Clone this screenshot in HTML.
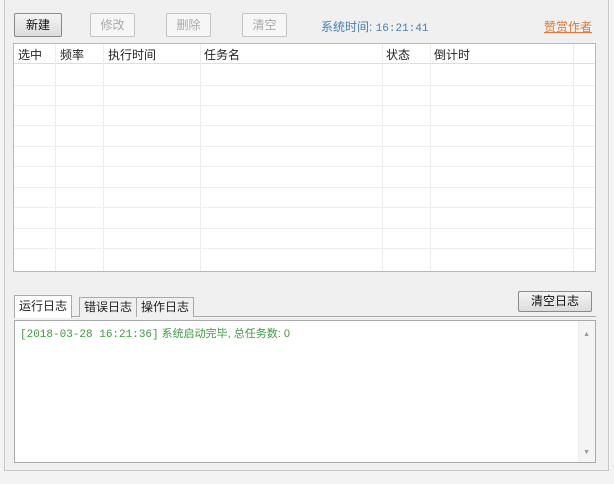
<!DOCTYPE html>
<html><head><meta charset="utf-8"><style>
*{box-sizing:border-box;margin:0;padding:0}
body{width:614px;height:484px;background:#f3f3f3;font-family:"Liberation Sans","Noto Sans CJK SC",sans-serif;font-size:12px;color:#222;position:relative;overflow:hidden}
.abs{position:absolute}
.frame{left:4px;top:0;width:605px;height:471px;border:1px solid #c8c8c8;border-top:none;background:#f0f0f0}
.btn{position:absolute;top:13px;height:24px;border:1px solid #c4c4c4;border-radius:2px;background:#f6f6f6;color:#aaa;text-align:center;line-height:22px;font-size:12px}
.btn.on{border-color:#8a8a8a;color:#111;background:linear-gradient(#f4f4f4,#dcdcdc)}
.table{left:13px;top:43px;width:583px;height:229px;border:1px solid #b8b8b8;background:#fff;overflow:hidden}
.hdr{position:absolute;top:0;left:0;right:0;height:20px;border-bottom:1px solid #dedede}
.hdr span{position:absolute;top:2px;font-size:12px}
.vl{position:absolute;top:0;bottom:0;width:1px;background:#ececec}
.hl{position:absolute;left:0;right:0;height:1px;background:#efefef}
.tab{position:absolute;height:22px;border:1px solid #aaa;border-bottom:none;background:#f0f0f0;line-height:20px;padding:0 4px;font-size:12px}
.log{left:14px;top:320px;width:582px;height:143px;border:1px solid #a9a9a9;background:#fff}
</style></head><body>
<div class="abs frame"></div>
<div class="btn on" style="left:14px;width:48px">新建</div>
<div class="btn" style="left:90px;width:45px">修改</div>
<div class="btn" style="left:166px;width:45px">删除</div>
<div class="btn" style="left:242px;width:45px">清空</div>
<div class="abs" style="left:321px;top:18px;color:#4a7fb5;font-size:12px">系统时间: <span style="font-family:'Liberation Mono',monospace;font-size:11px">16:21:41</span></div>
<div class="abs" style="left:544px;top:18px;color:#d87a3a;text-decoration:underline;font-size:12px">赞赏作者</div>
<div class="abs table">
<div class="hdr"><span style="left:4px">选中</span><span style="left:46px">频率</span><span style="left:94px">执行时间</span><span style="left:190px">任务名</span><span style="left:372px">状态</span><span style="left:420px">倒计时</span></div>
<div class="vl" style="left:41px"></div><div class="vl" style="left:89px"></div><div class="vl" style="left:186px"></div><div class="vl" style="left:368px"></div><div class="vl" style="left:416px"></div><div class="vl" style="left:559px"></div>
<div class="hl" style="top:41px"></div><div class="hl" style="top:61px"></div><div class="hl" style="top:81px"></div><div class="hl" style="top:102px"></div><div class="hl" style="top:122px"></div><div class="hl" style="top:143px"></div><div class="hl" style="top:163px"></div><div class="hl" style="top:184px"></div><div class="hl" style="top:204px"></div>
</div>
<div class="abs" style="left:14px;top:316px;width:582px;height:1px;background:#aaa"></div>
<div class="tab" style="left:14px;top:295px;background:#fff;height:23px;z-index:2">运行日志</div>
<div class="tab" style="left:79px;top:297px;height:20px;line-height:18px">错误日志</div>
<div class="tab" style="left:136px;top:297px;height:20px;line-height:18px">操作日志</div>
<div class="btn on" style="left:518px;top:291px;width:74px;height:21px;line-height:19px">清空日志</div>
<div class="abs log">
<div style="position:absolute;left:5px;top:4px;color:#3e9a3e;font-size:11px"><span style="font-family:'Liberation Mono',monospace">[2018-03-28 16:21:36]</span> 系统启动完毕, 总任务数: 0</div>
<div style="position:absolute;right:0;top:0;width:17px;height:141px;background:#f4f4f4;border-left:1px solid #eee"></div>
<div style="position:absolute;right:5px;top:10px;color:#999;font-size:7px">▲</div>
<div style="position:absolute;right:5px;bottom:6px;color:#999;font-size:7px">▼</div>
</div>
</body></html>
